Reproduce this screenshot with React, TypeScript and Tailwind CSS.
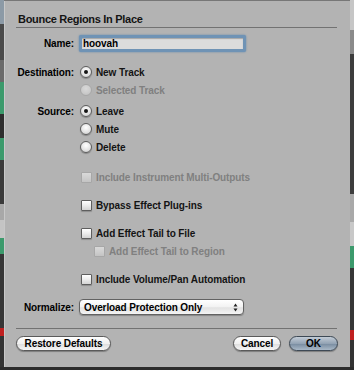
const font = "font-['Liberation_Sans',Arial,sans-serif]";

function Radio({ checked, disabled }: { checked?: boolean; disabled?: boolean }) {
  return (
    <span
      className={`flex h-[12px] w-[12px] shrink-0 items-center justify-center rounded-full border bg-[radial-gradient(circle_at_50%_35%,#ffffff,#e4e4e4_55%,#c4c4c4)] ${
        disabled ? "border-[#9c9c9c] opacity-50" : "border-[#5e5e5e] shadow-[0_1px_1px_rgba(0,0,0,0.25)]"
      }`}
    >
      {checked && <span className="h-[4px] w-[4px] rounded-full bg-[#151515]" />}
    </span>
  );
}

function Check({ disabled }: { disabled?: boolean }) {
  return (
    <span
      className={`block h-[11px] w-[11px] shrink-0 rounded-[1px] border bg-gradient-to-b from-[#ffffff] via-[#ececec] to-[#d4d4d4] ${
        disabled ? "border-[#9c9c9c] opacity-50" : "border-[#5e5e5e] shadow-[0_1px_1px_rgba(0,0,0,0.2)]"
      }`}
    />
  );
}

function Row({
  label,
  children,
  className = "",
}: {
  label?: string;
  children?: React.ReactNode;
  className?: string;
}) {
  return (
    <div className={`flex h-[18px] items-center gap-[5px] ${className}`}>
      <div className="w-[58px] shrink-0 text-right">{label}</div>
      <div className="flex items-center">{children}</div>
    </div>
  );
}

function Opt({
  kind,
  text,
  checked,
  disabled,
  indent,
}: {
  kind: "radio" | "check";
  text: string;
  checked?: boolean;
  disabled?: boolean;
  indent?: boolean;
}) {
  return (
    <div className={`flex items-center gap-[4px] ${indent ? "ml-[15px]" : kind === "radio" ? "ml-[1px]" : "ml-[2px]"}`}>
      {kind === "radio" ? <Radio checked={checked} disabled={disabled} /> : <Check disabled={disabled} />}
      <span className={disabled ? "text-[#808080]" : "text-[#141414]"}>{text}</span>
    </div>
  );
}

function Button({ children, primary, className = "" }: { children: React.ReactNode; primary?: boolean; className?: string }) {
  return (
    <div
      className={`flex h-[15px] items-center justify-center rounded-full border ${
        primary
          ? "border-[#3d4955] bg-[linear-gradient(#c3ccd6,#93a3b4_50%,#7b8ea2_55%,#a9b8c7)]"
          : "border-[#5a5a5a] bg-[linear-gradient(#ffffff,#f0f0f0_50%,#dedede_55%,#f6f6f6)]"
      } shadow-[0_1px_1px_rgba(0,0,0,0.3)] ${className}`}
    >
      {children}
    </div>
  );
}

function Strip({ parts }: { parts: [number, string][] }) {
  return (
    <div className="flex w-[4px] shrink-0 flex-col">
      {parts.map(([h, c], i) => (
        <div key={i} style={{ height: h, background: c }} />
      ))}
    </div>
  );
}

export default function App() {
  return (
    <div className={`h-[370px] w-[354px] overflow-hidden bg-[#2c2c2c] text-[10px] font-bold tracking-[-0.1px] ${font}`}>
      <div className="flex h-[367px]">
        <Strip
          parts={[
            [24, "#8c9aa6"],
            [36, "#4a4a4a"],
            [22, "#6a6a6a"],
            [32, "#3c9a6c"],
            [24, "#2e2e2e"],
            [22, "#3c9a6c"],
            [44, "#3a3a3a"],
            [16, "#a8a8a8"],
            [18, "#c4c4c4"],
            [16, "#3c9a6c"],
            [74, "#363636"],
            [8, "#c02020"],
            [31, "#333333"],
          ]}
        />
        <div className="flex w-[346px] flex-col border-t border-[#777] bg-[#b3b3b3] pt-[11px] shadow-[inset_1px_0_0_#c8c8c8]">
          <div className="h-[15px] pl-[14px] text-[11px] leading-[14px] tracking-[-0.3px] text-[#141414]">
            Bounce Regions In Place
          </div>
          <div className="ml-[12px] h-px w-[321px] bg-[#727272]" />

          <div className="flex flex-col pl-[12px]">
            <div className="mt-[7px] flex h-[17px] items-center gap-[5px]">
              <div className="w-[58px] shrink-0 text-right">Name:</div>
              <div className="flex h-[17px] w-[167px] items-center rounded-[2px] border-[3px] border-[#6f93b5] bg-[#dcdcdc] pl-[1px] shadow-[0_0_2px_#5d86ad,inset_0_1px_1px_rgba(0,0,0,0.25)]">
                hoovah
              </div>
            </div>

            <Row label="Destination:" className="mt-[11px]">
              <Opt kind="radio" text="New Track" checked />
            </Row>
            <Row>
              <Opt kind="radio" text="Selected Track" disabled />
            </Row>

            <Row label="Source:" className="mt-[3px]">
              <Opt kind="radio" text="Leave" checked />
            </Row>
            <Row>
              <Opt kind="radio" text="Mute" />
            </Row>
            <Row>
              <Opt kind="radio" text="Delete" />
            </Row>

            <Row className="mt-[12px]">
              <Opt kind="check" text="Include Instrument Multi-Outputs" disabled />
            </Row>
            <Row className="mt-[10px]">
              <Opt kind="check" text="Bypass Effect Plug-ins" />
            </Row>
            <Row className="mt-[10px]">
              <Opt kind="check" text="Add Effect Tail to File" />
            </Row>
            <Row>
              <Opt kind="check" text="Add Effect Tail to Region" disabled indent />
            </Row>
            <Row className="mt-[10px]">
              <Opt kind="check" text="Include Volume/Pan Automation" />
            </Row>

            <div className="mt-[11px] flex h-[16px] items-center gap-[5px]">
              <div className="w-[58px] shrink-0 text-right">Normalize:</div>
              <div className="flex h-[16px] w-[165px] items-center justify-between rounded-[4px] border border-[#626262] bg-[linear-gradient(#ffffff,#f2f2f2_50%,#e2e2e2_55%,#f4f4f4)] pl-[4px] pr-[5px] shadow-[0_1px_1px_rgba(0,0,0,0.25)]">
                <span>Overload Protection Only</span>
                <svg width="5" height="9" viewBox="0 0 5 9">
                  <path d="M2.5 0.5 L4.5 3.5 H0.5 Z M2.5 8.5 L4.5 5.5 H0.5 Z" fill="#222" />
                </svg>
              </div>
            </div>
          </div>

          <div className="ml-[12px] mt-[13px] h-px w-[321px] bg-[#727272]" />

          <div className="mt-[7px] flex pl-[12px] pr-[12px]">
            <Button className="w-[95px]">Restore Defaults</Button>
            <div className="flex-1" />
            <Button className="w-[48px]">Cancel</Button>
            <Button primary className="ml-[8px] w-[49px]">
              OK
            </Button>
          </div>
        </div>
        <Strip
          parts={[
            [30, "#c6c6c6"],
            [24, "#8a8a8a"],
            [140, "#3d3d3d"],
            [28, "#a9a9a9"],
            [24, "#c8c8c8"],
            [22, "#3c9a6c"],
            [62, "#363636"],
            [10, "#c02020"],
            [27, "#333333"],
          ]}
        />
      </div>
    </div>
  );
}
